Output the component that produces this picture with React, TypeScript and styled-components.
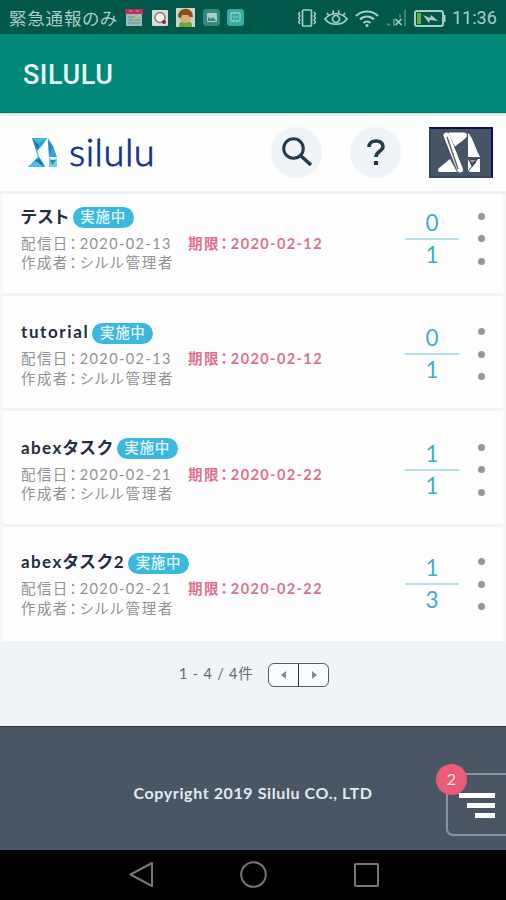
import React from 'react';
import styled, { createGlobalStyle } from 'styled-components';

const GlobalStyle = createGlobalStyle`
  *, *::before, *::after { box-sizing: border-box; }
  body { margin: 0; background: #f0f3f8; }
  svg { display: block; flex: none; }
`;

const Screen = styled.div`
  width: 506px;
  height: 900px;
  overflow: hidden;
  display: flex;
  flex-direction: column;
  background: #f0f3f8;
  font-family: Lato, 'Noto Sans CJK JP', sans-serif;
  font-feature-settings: 'palt';
`;

const StatusBar = styled.div`
  height: 34px;
  flex: none;
  display: flex;
  align-items: center;
  background: #00574a;
  color: #a9cdc6;
  padding: 1px 8px 0 9px;
  font-family: Roboto, 'Noto Sans CJK JP', sans-serif;
`;

const Carrier = styled.span`
  width: 116px;
  font-size: 17.5px;
  letter-spacing: 0.8px;
  white-space: nowrap;
`;

const Notices = styled.div`
  display: flex;
  align-items: center;
  gap: 7.5px;
`;

const SystemIcons = styled.div`
  margin-left: auto;
  display: flex;
  align-items: center;
`;

const Clock = styled.span`
  width: 46px;
  margin-left: 6px;
  font-size: 18px;
  white-space: nowrap;
`;

const AppBar = styled.div`
  height: 79px;
  flex: none;
  display: flex;
  align-items: center;
  padding: 3px 23px 0;
  background: #008878;
  border-bottom: 1px solid #007466;
  color: #e9f6f4;
  font: 500 27px Roboto, sans-serif;
  letter-spacing: 0.5px;
`;

const SiteHeader = styled.header`
  height: 81px;
  flex: none;
  display: flex;
  align-items: center;
  padding: 0 13px 0 28px;
  background: #fefefe;
  border-bottom: 3px solid #eff0f2;
  box-shadow: inset 0 4px 3px -2px #d5d9da;
`;

const Wordmark = styled.span`
  margin: -2px auto 0 11px;
  font: 300 38px/44px Lato, sans-serif;
  letter-spacing: 0.5px;
  color: #112f91;
  -webkit-text-stroke: 0.8px #112f91;
`;

const RoundButton = styled.button`
  width: 51px;
  height: 51px;
  margin-right: 28px;
  padding: 0;
  border: 0;
  border-radius: 50%;
  background: #f0f4f9;
  display: flex;
  align-items: center;
  justify-content: center;
`;

const Avatar = styled.div`
  width: 64px;
  height: 51px;
  border: 2px solid #11104f;
  border-left-color: #39475c;
  border-bottom-color: #39475c;
  background: #465467;
`;

const TaskList = styled.main`
  flex: none;
  display: flex;
  flex-direction: column;
  padding: 0 3px;
  background: #f6f8fa;
`;

const TaskRow = styled.article<{ $height: number }>`
  height: ${p => p.$height}px;
  display: flex;
  align-items: flex-end;
  padding: 0 17px 20px 18px;
  background: #fefefe;
  border-bottom: 3px solid #f3f4f6;
  &:last-child { border-bottom-color: #fefefe; }
`;

const TaskBody = styled.div`
  flex: 1;
  display: flex;
  flex-direction: column;
`;

const TitleLine = styled.div`
  height: 22px;
  margin-bottom: 6px;
  display: flex;
  align-items: center;
  gap: 3px;
`;

const Title = styled.h2<{ $tracking: number }>`
  margin: 0;
  font-size: 17px;
  line-height: 22px;
  font-weight: 700;
  letter-spacing: ${p => p.$tracking}px;
  color: #242d40;
  white-space: nowrap;
`;

const Badge = styled.span`
  width: 61px;
  height: 21px;
  margin-top: 2px;
  border-radius: 11px;
  background: #3bb8e0;
  color: #e4f6fc;
  font-size: 14.5px;
  font-weight: 500;
  line-height: 20px;
  letter-spacing: 0.7px;
  text-align: center;
`;

const MetaLine = styled.div`
  height: 19.5px;
  display: flex;
  font-size: 14.5px;
  line-height: 19.5px;
  letter-spacing: 1.4px;
  color: #8f9295;
  white-space: nowrap;
`;

const Published = styled.span`
  width: 167px;
`;

const Deadline = styled.span`
  color: #de7289;
  font-weight: 700;
`;

const Author = styled.span`
  letter-spacing: 1.75px;
`;

const Colon = styled.span`
  margin: 0 1.8px 0 0.6px;
`;

const Progress = styled.div`
  width: 54px;
  margin: 0 19px 3px 0;
  display: flex;
  flex-direction: column;
  align-items: center;
  color: #3faecb;
  font-size: 22.5px;
  line-height: 30px;
`;

const Rule = styled.div`
  width: 54px;
  height: 2px;
  background: #b8e0ea;
`;

const More = styled.div`
  width: 8px;
  margin-bottom: 8px;
  display: flex;
  flex-direction: column;
  gap: 15.5px;
`;

const Dot = styled.span`
  width: 7px;
  height: 7px;
  border-radius: 50%;
  background: #969898;
`;

const Pagination = styled.nav`
  height: 85px;
  flex: none;
  display: flex;
  align-items: flex-start;
  padding: 22px 0 0 179px;
`;

const Count = styled.span`
  width: 89px;
  margin-top: -1px;
  font-size: 14.5px;
  line-height: 24px;
  letter-spacing: 0.8px;
  color: #66696d;
  white-space: nowrap;
`;

const Pager = styled.div`
  width: 61px;
  height: 24px;
  display: flex;
  border: 1px solid #555b61;
  border-radius: 6px;
  background: #fafbfc;
`;

const PagerStep = styled.span`
  flex: 1;
  display: flex;
  align-items: center;
  justify-content: center;
  & + & { border-left: 1px solid #30353a; }
`;

const Footer = styled.footer`
  height: 124px;
  flex: none;
  position: relative;
  display: flex;
  align-items: center;
  justify-content: center;
  padding-top: 8px;
  border-top: 1px solid #26374b;
  background: #4a5666;
  color: #e3e9f0;
  font-size: 16px;
  font-weight: 700;
  letter-spacing: 0.6px;
`;

const FloatingMenu = styled.div`
  position: absolute;
  top: 46px;
  right: -7px;
  width: 67px;
  height: 63px;
  border: 2px solid #8894a3;
  border-radius: 7px;
  background: #4a5666;
`;

const MenuBars = styled.div`
  width: 36px;
  margin: 18px 0 0 11px;
  display: flex;
  flex-direction: column;
  align-items: flex-end;
  gap: 5px;
`;

const MenuBar = styled.span<{ $length: number }>`
  width: ${p => p.$length}px;
  height: 5px;
  background: #fff;
`;

const MenuCount = styled.span`
  position: absolute;
  top: -11px;
  left: -12px;
  width: 31px;
  height: 31px;
  border-radius: 50%;
  background: #ea5c77;
  color: #fbe8ec;
  font-size: 16px;
  font-weight: 400;
  line-height: 30px;
  letter-spacing: 0;
  text-align: center;
`;

const NavBar = styled.div`
  flex: 1;
  display: flex;
  align-items: flex-start;
  padding: 11px 0 0 128px;
  gap: 86px;
  background: #000;
`;

const CalendarIcon = () => (
  <svg width="18" height="18" viewBox="0 0 18 18">
    <path d="M1 1h16v16H1z" fill="#9fb8bb" />
    <path d="M0 0h18v5H0z" fill="#bc3158" />
    <path d="M4 2h3M11 2h3" stroke="#d68a9c" strokeWidth="1" />
    <path d="M3 8h12M3 11h5m2 0h5M3 14h12" stroke="#5b9492" strokeWidth="1.2" />
    <path d="M9 9l6-2" stroke="#c7c770" strokeWidth="1.5" />
  </svg>
);

const SearchNoticeIcon = () => (
  <svg width="18" height="18" viewBox="0 0 18 18">
    <rect x="1" y="1" width="16" height="16" rx="1" fill="#d9dcda" />
    <circle cx="9" cy="8.500" r="5" fill="#edf0ee" stroke="#8b7b82" strokeWidth="1.500" />
    <circle cx="13" cy="13" r="2" fill="#98193b" />
  </svg>
);

const PersonIcon = () => (
  <svg width="19" height="19" viewBox="0 0 19 19">
    <path d="M0 0h19v19H0z" fill="#c8d8c6" />
    <path d="M3 19c0-6 3-6 6.500-6s6.500 0 6.500 6" fill="#69a932" />
    <circle cx="9.500" cy="9" r="6" fill="#dcae7d" />
    <path d="M2 9c0-11 15-11 15 0h-3l-2-2H6L5 10z" fill="#8a4c1d" />
  </svg>
);

const PhotoIcon = () => (
  <svg width="17" height="17" viewBox="0 0 17 17">
    <rect width="17" height="17" rx="3" fill="#36877e" />
    <rect x="4" y="4" width="10" height="9" rx="1" fill="#a9cfca" />
    <path d="M5 12V8l3 2 2-2 3 4z" fill="#36877e" />
  </svg>
);

const MessageIcon = () => (
  <svg width="17" height="17" viewBox="0 0 17 17">
    <rect width="17" height="17" rx="3" fill="#38aaa3" />
    <rect x="4" y="4" width="9" height="8" rx="1" fill="none" stroke="#8bd1c8" strokeWidth="1.300" />
    <path d="M6 7l2.500 2L11 7" fill="none" stroke="#8bd1c8" />
  </svg>
);

const StatusGlyphs = () => (
  <svg width="149" height="20" viewBox="0 0 149 20" fill="none" stroke="#a9cdc6" strokeWidth="1.700">
    <rect x="5.500" y="2" width="9" height="16" rx="1" />
    <path d="M3 4l-1.500 2L3 8l-1.500 2L3 12l-1.500 2L3 16M17 4l1.500 2L17 8l1.500 2L17 12l1.500 2L17 16" strokeWidth="1.400" />
    <path d="M28 11c5-7 17-7 22 0-5 7-17 7-22 0zM30 5l2 3M36 2.500l.5 3M42 2.500l-.5 3M48 5l-2 3" />
    <circle cx="39" cy="11" r="3.500" />
    <path d="M59 8c6-6 16-6 22 0M63 11.500c4-4 10-4 14 0M66.500 15c2-2 5-2 7 0" strokeWidth="2.200" />
    <circle cx="70" cy="17.500" r="1.500" fill="#a9cdc6" stroke="none" />
    <path d="M90 16.500h3M97 18V11" stroke="#4f9388" strokeWidth="2" />
    <path d="M108 2v16M103 6v4" stroke="#378378" strokeWidth="2" />
    <path d="M98.500 11l6 6m0-6l-6 6" />
    <rect x="118" y="3" width="28" height="15" rx="2" strokeWidth="2" />
    <path d="M147.500 7v7" strokeWidth="2" />
    <path d="M120 5h4v11h-4z" fill="#6eaf31" stroke="none" />
    <path d="M126 7l7 3 1-3 7 6-8-1-1 3z" fill="#a9cdc6" stroke="none" />
  </svg>
);

const BrandMark = () => (
  <svg width="30" height="31" viewBox="0 0 30 31">
    <path d="M4 1h15l-8 13 6 16H0l10-10z" fill="#2d9bd0" />
    <path d="M4 1l6 6 9-6z" fill="#40b8df" />
    <path d="M4 1l7 14V8z" fill="#1779b5" />
    <path d="M19 3l-7 9 5 17-6-9-2-6z" fill="#e8f7fc" />
    <path d="M0 30l8-6 8 6z" fill="#45c0e6" />
    <path d="M7 23l5-1 4 8z" fill="#2170ae" />
    <path d="M20 1l5 8 4 11h-8z" fill="#32a8d6" />
    <path d="M20 3l5 7-4 9z" fill="#268cc4" />
    <path d="M21 21l4 2 4-2v9h-8z" fill="#70cfea" />
    <path d="M22 23h6l-4 5z" fill="#2889bb" />
  </svg>
);

const AvatarMark = () => (
  <svg width="60" height="47" viewBox="0 0 60 47">
    <path d="M18 4h15c4 0 3 4 0 6l-9 7z" fill="#fff" stroke="#fff" strokeLinejoin="round" />
    <path d="M8 39l11-9 7 13H9c-2 0-3-2-1-4z" fill="#fff" />
    <path d="M15.500 6.500l13.500 34" stroke="#fff" strokeWidth="6" strokeLinecap="round" />
    <path d="M16 8l11 32" stroke="#5c5860" strokeWidth="1.400" />
    <path d="M37 4c4 3 7 14 12 24H37zM37 30h12v13H39l-2-2z" fill="#fff" />
    <path d="M37 30h10l-6 8z" fill="#454852" />
    <path d="M39 31h6l-4 3z" fill="#a5a29c" />
    <path d="M38 41l7-8" stroke="#343b46" />
  </svg>
);

interface Task {
  title: string;
  tracking: number;
  published: string;
  deadline: string;
  done: number;
  total: number;
  height: number;
}

const tasks: Task[] = [
  { title: 'テスト', tracking: 0.9, published: '2020-02-13', deadline: '2020-02-12', done: 0, total: 1, height: 101.5 },
  { title: 'tutorial', tracking: 1.6, published: '2020-02-13', deadline: '2020-02-12', done: 0, total: 1, height: 115.5 },
  { title: 'abexタスク', tracking: 1.4, published: '2020-02-21', deadline: '2020-02-22', done: 1, total: 1, height: 115.5 },
  { title: 'abexタスク2', tracking: 1.4, published: '2020-02-21', deadline: '2020-02-22', done: 1, total: 3, height: 114.5 },
];

const TaskItem = ({ task }: { task: Task }) => (
  <TaskRow $height={task.height}>
    <TaskBody>
      <TitleLine>
        <Title $tracking={task.tracking}>{task.title}</Title>
        <Badge>実施中</Badge>
      </TitleLine>
      <MetaLine>
        <Published>配信日<Colon>：</Colon>{task.published}</Published>
        <Deadline>期限<Colon>：</Colon>{task.deadline}</Deadline>
      </MetaLine>
      <MetaLine>
        <span>作成者<Colon>：</Colon></span>
        <Author>シルル管理者</Author>
      </MetaLine>
    </TaskBody>
    <Progress>
      <span>{task.done}</span>
      <Rule />
      <span>{task.total}</span>
    </Progress>
    <More>
      <Dot />
      <Dot />
      <Dot />
    </More>
  </TaskRow>
);

export default function App() {
  return (
    <>
      <GlobalStyle />
      <Screen lang="ja">
        <StatusBar>
          <Carrier>緊急通報のみ</Carrier>
          <Notices>
            <CalendarIcon />
            <SearchNoticeIcon />
            <PersonIcon />
            <PhotoIcon />
            <MessageIcon />
          </Notices>
          <SystemIcons>
            <StatusGlyphs />
            <Clock>11:36</Clock>
          </SystemIcons>
        </StatusBar>
        <AppBar>SILULU</AppBar>
        <SiteHeader>
          <BrandMark />
          <Wordmark>silulu</Wordmark>
          <RoundButton aria-label="検索">
            <svg width="32" height="32" viewBox="0 0 32 32" fill="none" stroke="#273a4a">
              <circle cx="12.500" cy="12.500" r="9.800" strokeWidth="3" />
              <path d="M19.500 19.500L30 29" strokeWidth="3.600" />
            </svg>
          </RoundButton>
          <RoundButton aria-label="ヘルプ">
            <svg width="22" height="28" viewBox="0 0 22 28" fill="none" stroke="#273a4a" strokeWidth="3.600">
              <path d="M4 9C4 1 18 1 18 8.500c0 4.500-7 5-7 10.500" />
              <path d="M11 23v4" strokeWidth="4.200" />
            </svg>
          </RoundButton>
          <Avatar>
            <AvatarMark />
          </Avatar>
        </SiteHeader>
        <TaskList>
          {tasks.map(task => (
            <TaskItem key={task.title} task={task} />
          ))}
        </TaskList>
        <Pagination>
          <Count>1 - 4 / 4件</Count>
          <Pager>
            <PagerStep>
              <svg width="6" height="8" viewBox="0 0 6 8"><path d="M5 0v8L0 4z" fill="#858a8e" /></svg>
            </PagerStep>
            <PagerStep>
              <svg width="6" height="8" viewBox="0 0 6 8"><path d="M1 0v8l5-4z" fill="#858a8e" /></svg>
            </PagerStep>
          </Pager>
        </Pagination>
        <Footer>
          Copyright 2019 Silulu CO., LTD
          <FloatingMenu>
            <MenuBars>
              <MenuBar $length={36} />
              <MenuBar $length={28} />
              <MenuBar $length={20} />
            </MenuBars>
            <MenuCount>2</MenuCount>
          </FloatingMenu>
        </Footer>
        <NavBar>
          <svg width="26" height="28" viewBox="0 0 26 28">
            <path d="M24 2v23L2.500 13.500z" fill="none" stroke="#777" strokeWidth="2" strokeLinejoin="round" />
          </svg>
          <svg width="28" height="28" viewBox="0 0 28 28">
            <circle cx="13.500" cy="13.500" r="12.300" fill="none" stroke="#777" strokeWidth="2" />
          </svg>
          <svg width="26" height="28" viewBox="0 0 26 28">
            <rect x="1" y="3" width="23" height="22" rx="1" fill="none" stroke="#777" strokeWidth="2" />
          </svg>
        </NavBar>
      </Screen>
    </>
  );
}
